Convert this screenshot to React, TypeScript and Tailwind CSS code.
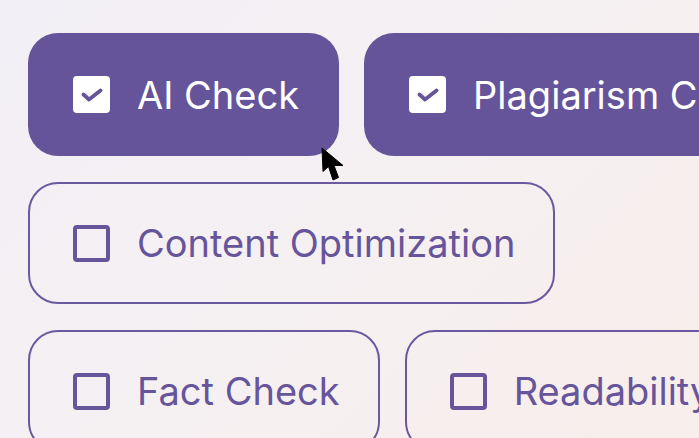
import React from "react";

const font = { fontFamily: "Inter, 'Noto Sans', sans-serif" };

function Checked() {
  return (
    <div className="w-[37px] h-[37px] shrink-0 rounded-[4px] bg-white flex items-center justify-center">
      <svg width="22" height="14" viewBox="0 0 22 14" fill="none">
        <path d="M2.5 6.5 L8 11.5 L19.5 2.5" stroke="#66549a" strokeWidth="3.8" strokeLinecap="round" strokeLinejoin="round" />
      </svg>
    </div>
  );
}

function Unchecked() {
  return <div className="w-[37px] h-[37px] shrink-0 rounded-[4px] border-[4px] border-[#67559b]" />;
}

function Pill({ label, checked }: { label: string; checked?: boolean }) {
  return (
    <div
      className={
        checked
          ? "h-[123px] shrink-0 rounded-[30px] bg-[#66549a] flex items-center pl-[45px] pr-[40px] gap-[27px] text-white"
          : "h-[122px] shrink-0 rounded-[30px] border-2 border-[#6a58a0] flex items-center pl-[43px] pr-[38px] gap-[27px] text-[#67559b]"
      }
    >
      {checked ? <Checked /> : <Unchecked />}
      <span className="text-[38px] leading-none whitespace-nowrap" style={font}>
        {label}
      </span>
    </div>
  );
}

export default function App() {
  return (
    <div className="relative w-[699px] h-[438px] overflow-hidden bg-[linear-gradient(135deg,#f2eff6_0%,#f5f0f2_50%,#f8eeeb_100%)]">
      <div className="flex flex-col gap-[26px] pl-[28px] pt-[33px]">
        <div className="flex gap-[25px]">
          <Pill label="AI Check" checked />
          <Pill label="Plagiarism Check" checked />
        </div>
        <div className="flex gap-[25px]">
          <Pill label="Content Optimization" />
        </div>
        <div className="flex gap-[25px]">
          <Pill label="Fact Check" />
          <Pill label="Readability" />
        </div>
      </div>
      <svg className="absolute left-[320px] top-[146px]" width="26" height="38" viewBox="0 0 26 38">
        <path d="M2 2 L3 25.5 L8.5 20.5 L13 34 L18.5 31.5 L14 19.5 L23 19.5 Z" fill="#000" stroke="#000" strokeWidth="1" strokeLinejoin="round" />
      </svg>
    </div>
  );
}
